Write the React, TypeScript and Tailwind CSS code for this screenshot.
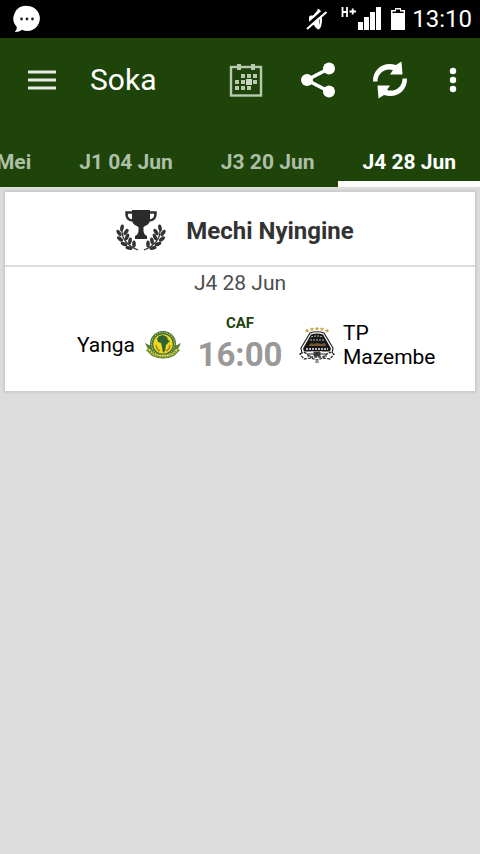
import React from "react";

const tabs = ["Mei", "J1 04 Jun", "J3 20 Jun", "J4 28 Jun"];

function StatusBar() {
  return (
    <div className="flex h-[38px] items-center justify-between bg-black pr-2 pl-3 text-white">
      <svg width="30" height="30" viewBox="0 0 30 30" aria-label="Message">
        <path d="M15.500 2a12.500 12.500 0 1 1-5.500 23.800C8 27.500 5 28.100 2.800 27.900c1.500-1.300 2.100-3 2-5A12.500 12.500 0 0 1 15.500 2z" fill="#fff" />
        <g fill="#222">
          <circle cx="9.500" cy="15" r="1.400" />
          <circle cx="15" cy="15" r="1.400" />
          <circle cx="20.500" cy="15" r="1.400" />
        </g>
      </svg>
      <div className="flex items-center">
        <svg width="22" height="24" viewBox="0 0 22 24" aria-label="Muted">
          <path d="M3 10.500q0-2 2-2h2L11 4q2-2 2 1v14q0 4-3 2l-3-4H5q-2 0-2-2z" fill="#fff" />
          <path d="M11.500 3c4.500 0 4.500 18 0 18.500" fill="none" stroke="#fff" strokeWidth="2.400" />
          <path d="M0 19.500L19 3" stroke="#000" strokeWidth="3" />
          <path d="M1 22L20.500 5" stroke="#fff" strokeWidth="2" />
        </svg>
        <svg className="ml-3" width="42" height="26" viewBox="0 0 42 26" aria-label="H+ signal">
          <path d="M2.500 1v10M7 1v10M2.500 6H7M9.500 5.500H16M12.700 2.500v6" fill="none" stroke="#fff" strokeWidth="1.800" />
          <path d="M18 16h5v8h-5zM24 11h5v13h-5zM30 6h5v18h-5zM36 1h5v23h-5z" fill="#fff" />
        </svg>
        <svg className="ml-2" width="16" height="24" viewBox="0 0 16 24" aria-label="Battery">
          <path d="M5 1h6v2h4v20H1V3h4z" fill="#fff" />
          <path d="M6 2.500h4v2h3.500v1.500h-11V4.500H6z" fill="#000" />
        </svg>
        <span className="ml-1.5 text-2xl leading-[38px]">13:10</span>
      </div>
    </div>
  );
}

function Toolbar() {
  return (
    <div className="flex h-[84px] items-center pl-6 text-white">
      <button aria-label="Menu" className="flex h-12 w-9 items-center justify-center">
        <svg width="28" height="22" viewBox="0 0 28 22">
          <path d="M0 3h28M0 11h28M0 19h28" stroke="#e6ece3" strokeWidth="3" />
        </svg>
      </button>
      <h1 className="ml-[30px] flex-1 text-3xl leading-9 font-normal">Soka</h1>
      <button aria-label="Calendar" className="flex h-12 w-[72px] items-center justify-center">
        <svg width="36" height="36" viewBox="0 0 36 36">
          <rect x="3" y="5" width="30" height="28.500" fill="none" stroke="#b8c9b2" strokeWidth="2.400" />
          <path
            d="M9 2h4v6H9zM23 2h4v6h-4zM13 12h4v4h-4zM19 12h4v4h-4zM25 12h4v4h-4zM7 18h4v4H7zM13 18h4v4h-4zM25 18h4v4h-4zM7 24h4v4H7zM13 24h4v4h-4zM19 24h4v4h-4z"
            fill="#b8c9b2"
          />
          <path d="M18 17h6v6h-6z" fill="#c8d6c3" />
        </svg>
      </button>
      <button aria-label="Share" className="flex h-12 w-[72px] items-center justify-center">
        <svg width="36" height="36" viewBox="0 0 36 36">
          <path d="M29 6.500L7 18l22 11.500" fill="none" stroke="#fff" strokeWidth="3.600" />
          <circle cx="29" cy="6.500" r="6" fill="#fff" />
          <circle cx="7" cy="18" r="6" fill="#fff" />
          <circle cx="29" cy="29.500" r="6" fill="#fff" />
        </svg>
      </button>
      <button aria-label="Refresh" className="flex h-12 w-[72px] items-center justify-center">
        <svg width="36" height="38" viewBox="0 0 36 38">
          <g fill="#fff">
            <path d="M1 20.500C.5 8 12 0 24 4l5.500-3.500 1 13H18l3-4.500C13 6.500 5.500 12 5.500 20.500z" />
            <path d="M35 17.500c.5 12.500-11 20.500-23 16.500l-5.500 3.500-1-13H18L15 29c8 2.500 15.500-3 15.500-11.500z" />
          </g>
        </svg>
      </button>
      <button aria-label="More options" className="flex h-12 w-[54px] items-center justify-center">
        <svg width="8" height="26" viewBox="0 0 8 26" fill="#fff">
          <circle cx="4" cy="4" r="3.200" />
          <circle cx="4" cy="13" r="3.200" />
          <circle cx="4" cy="22" r="3.200" />
        </svg>
      </button>
    </div>
  );
}

function Trophy() {
  const leaves = [
    [6, 19, 10], [10, 23, 35], [3, 24, -35], [11, 28, 25], [4, 30, -50],
    [14, 32, 10], [8, 35, -65], [18, 35, 0], [13, 39, -80],
  ];
  const branch = (
    <g>
      <path d="M6 20Q5 34 22 41" fill="none" stroke="#333" strokeWidth="1.200" />
      {leaves.map(([x, y, r]) => (
        <ellipse key={`${x}-${y}`} cx={x} cy={y} rx="1.800" ry="3.600" transform={`rotate(${r} ${x} ${y})`} fill="#333" />
      ))}
    </g>
  );
  return (
    <svg width="50" height="44" viewBox="0 0 50 44" aria-label="Trophy">
      <path d="M17 3.500h-6.500q-.5 8 6.500 8h3M33 3.500h6.500q.5 8-6.500 8h-3" fill="none" stroke="#2e2e2e" strokeWidth="2.600" />
      <path d="M16 1h18v9c0 5-3 6-6.500 8v4q.5 4 3.500 5v3H19v-3q3-1 3.500-5v-4C19 16 16 15 16 10z" fill="#2b2b2b" />
      {branch}
      <g transform="translate(50 0) scale(-1 1)">{branch}</g>
    </svg>
  );
}

function YangaCrest() {
  return (
    <svg className="shrink-0" width="36" height="36" viewBox="0 0 36 36" aria-label="Yanga crest">
      <path d="M0 16l6 3 4 7h16l4-7 6-3-3 6 2 1-6 6q-11 5-22 0l-6-6 2-1z" fill="#5b7d2e" />
      <circle cx="18" cy="17" r="13" fill="#39683a" />
      <circle cx="18" cy="17" r="11.500" fill="none" stroke="#c3c95a" strokeWidth="1.200" strokeDasharray="1.500 1" />
      <circle cx="18" cy="17" r="9.800" fill="#edd91f" />
      <path d="M14 9l4-1 4 2 1 3 2 1-4 4-1 6-2 2-1-6-1-4-3-1-1-3z" fill="#2e6332" />
      <path d="M11 18q1 5 4 6M25 18q-1 5-4 6" fill="none" stroke="#a47825" strokeWidth="1.300" />
      <path d="M4 22q3 6 10 7h8q7-1 10-7" fill="none" stroke="#d3cf43" strokeWidth="2.600" />
      <path d="M5 24q5 6 13 6t13-6" fill="none" stroke="#567c32" strokeWidth="1.200" strokeDasharray="1.500 1" />
    </svg>
  );
}

function MazembeCrest() {
  return (
    <svg className="shrink-0" width="36" height="36" viewBox="0 0 36 36" aria-label="TP Mazembe crest">
      <g fill="#c7a64b">
        {[[8, 3], [13, 1.500], [18, 1], [23, 1.500], [28, 3]].map(([x, y]) => (
          <path key={x} d={`M${x} ${y - 1.500}l.7 1.300 1.600.1-1.200 1.100.4 1.500-1.500-.8-1.500.8.4-1.500-1.200-1.100 1.600-.1z`} />
        ))}
      </g>
      <path d="M11 6q7-2.500 14 0l9 15-1 6H3l-1-6z" fill="#fff" stroke="#222" strokeWidth="1.200" />
      <path d="M12 7.500q6-2 12 0l8 14-1 3H5l-1-3z" fill="#171717" />
      <path d="M12 10q6-2 12 0M11 13h14" fill="none" stroke="#c5c5c5" strokeWidth="1" strokeDasharray="2 1" />
      <path d="M10 18q2-3 5-1l3-1 4 1 4-1 1 3H10z" fill="#76562d" />
      <path d="M7 22h22M12 25h12" stroke="#ededed" strokeWidth="1.500" strokeDasharray="2 1" />
      <path d="M1 27q4-3 7 0l3 3h14l3-3q3-3 7 0l-4 5-7-1-6 2-6-2-7 1z" fill="#fff" stroke="#333" strokeWidth="1.300" strokeDasharray="3 1" />
      <path d="M15 25h6v4h-6zM8 29h4M24 29h4M16 35h4" fill="#333" stroke="#444" />
    </svg>
  );
}

export default function App() {
  return (
    <div className="min-h-screen bg-[#dddddd] font-[Roboto,sans-serif]">
      <StatusBar />
      <header className="bg-[#1e440a]">
        <Toolbar />
        <nav className="flex h-[65px] justify-end overflow-hidden">
          {tabs.map((tab) => (
            <button
              key={tab}
              className={
                tab === "J4 28 Jun"
                  ? "shrink-0 border-b-6 border-white px-6 pt-5 text-[21px] leading-6 font-bold whitespace-nowrap text-white"
                  : "shrink-0 border-b-6 border-transparent px-6 pt-5 text-[21px] leading-6 font-bold whitespace-nowrap text-[#aebfa7]"
              }
            >
              {tab}
            </button>
          ))}
        </nav>
      </header>
      <main className="px-[5px] pt-[5px]">
        <section className="bg-white shadow-[0_0_2px_2px_#cccccc]">
          <div className="flex h-[75px] items-center justify-center gap-5 border-b-2 border-[#dddddd] pt-1 pr-2.5">
            <Trophy />
            <h2 className="text-2xl leading-8 font-bold text-[#333333]">Mechi Nyingine</h2>
          </div>
          <p className="pt-1 text-center text-[21px] leading-6 text-[#4d4d4d]">J4 28 Jun</p>
          <div className="grid grid-cols-[1fr_98px_1fr] items-center pt-4 pb-4 text-[21px] leading-6 text-black">
            <div className="flex items-center justify-end gap-2.5 pt-1 pr-2.5">
              <span>Yanga</span>
              <YangaCrest />
            </div>
            <div className="flex flex-col items-center">
              <span className="text-[15px] leading-6 font-bold text-[#1e440a]">CAF</span>
              <time className="text-[33px] leading-10 font-bold text-[#999999]">16:00</time>
            </div>
            <div className="flex items-center gap-2 pt-1 pr-8 pl-2.5">
              <MazembeCrest />
              <span>TP Mazembe</span>
            </div>
          </div>
        </section>
      </main>
    </div>
  );
}
